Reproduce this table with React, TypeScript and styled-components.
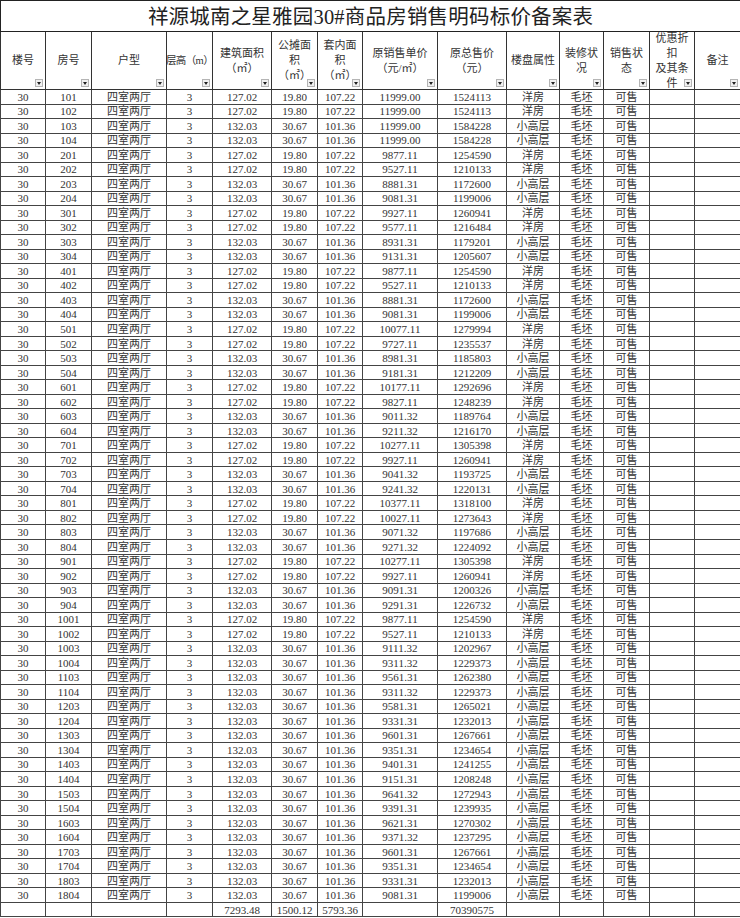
import styled, { createGlobalStyle } from 'styled-components';

const GlobalStyle = createGlobalStyle`
  html, body {
    margin: 0;
    padding: 0;
    background: #fff;
    overflow: hidden;
  }
  body {
    font-family: "Liberation Serif", "Noto Sans CJK SC", serif;
    color: #333;
  }
`;

const Sheet = styled.table`
  width: 740px;
  table-layout: fixed;
  border-collapse: collapse;
  font-size: 11px;
`;

const TitleCell = styled.th`
  height: 29px;
  padding: 1px 0 0;
  border: 1px solid #222;
  font-size: 20.5px;
  font-weight: normal;
  line-height: 28px;
  text-align: center;
  color: #222;
  letter-spacing: 0.2px;
  overflow: hidden;
`;

const HeadCell = styled.th`
  position: relative;
  height: 57px;
  padding: 0;
  border: 1px solid #333;
  font-weight: normal;
  vertical-align: middle;
`;

const HeadText = styled.div<{ $tight?: boolean }>`
  height: 57px;
  display: flex;
  flex-direction: column;
  justify-content: center;
  align-items: center;
  overflow: hidden;
  font-size: ${({ $tight }) => ($tight ? '10.5px' : '11px')};
  letter-spacing: ${({ $tight }) => ($tight ? '-0.6px' : '0')};
  line-height: 15px;
  white-space: nowrap;
  color: #333;
`;

const FilterButton = styled.span`
  position: absolute;
  right: 2px;
  bottom: 2px;
  width: 8px;
  height: 8px;
  box-sizing: border-box;
  border: 1px solid #b5b5b5;
  background: #f1f1f1;

  &::after {
    content: '';
    position: absolute;
    left: 1px;
    top: 2px;
    border-left: 2.5px solid transparent;
    border-right: 2.5px solid transparent;
    border-top: 3px solid #222;
  }
`;

const Row = styled.tr`
  height: 14.53px;
`;

const Cell = styled.td`
  padding: 0;
  border: 1px solid #444;
  text-align: center;
  line-height: 12px;
  white-space: nowrap;
  overflow: hidden;
  font-size: 11px;
`;

const widths = [45, 46, 75, 46, 59, 46, 45, 75, 69, 53, 44, 46, 45, 46];

const headers: string[][] = [
  ['楼号'],
  ['房号'],
  ['户型'],
  ['层高（m）'],
  ['建筑面积', '（㎡）'],
  ['公摊面', '积', '（㎡）'],
  ['套内面', '积', '（㎡）'],
  ['原销售单价', '（元/㎡）'],
  ['原总售价', '（元）'],
  ['楼盘属性'],
  ['装修状', '况'],
  ['销售状', '态'],
  ['优惠折', '扣', '及其条', '件'],
  ['备注'],
];

// room, unit price, total price
const sales: [string, string, string][] = [
  ['101', '11999.00', '1524113'],
  ['102', '11999.00', '1524113'],
  ['103', '11999.00', '1584228'],
  ['104', '11999.00', '1584228'],
  ['201', '9877.11', '1254590'],
  ['202', '9527.11', '1210133'],
  ['203', '8881.31', '1172600'],
  ['204', '9081.31', '1199006'],
  ['301', '9927.11', '1260941'],
  ['302', '9577.11', '1216484'],
  ['303', '8931.31', '1179201'],
  ['304', '9131.31', '1205607'],
  ['401', '9877.11', '1254590'],
  ['402', '9527.11', '1210133'],
  ['403', '8881.31', '1172600'],
  ['404', '9081.31', '1199006'],
  ['501', '10077.11', '1279994'],
  ['502', '9727.11', '1235537'],
  ['503', '8981.31', '1185803'],
  ['504', '9181.31', '1212209'],
  ['601', '10177.11', '1292696'],
  ['602', '9827.11', '1248239'],
  ['603', '9011.32', '1189764'],
  ['604', '9211.32', '1216170'],
  ['701', '10277.11', '1305398'],
  ['702', '9927.11', '1260941'],
  ['703', '9041.32', '1193725'],
  ['704', '9241.32', '1220131'],
  ['801', '10377.11', '1318100'],
  ['802', '10027.11', '1273643'],
  ['803', '9071.32', '1197686'],
  ['804', '9271.32', '1224092'],
  ['901', '10277.11', '1305398'],
  ['902', '9927.11', '1260941'],
  ['903', '9091.31', '1200326'],
  ['904', '9291.31', '1226732'],
  ['1001', '9877.11', '1254590'],
  ['1002', '9527.11', '1210133'],
  ['1003', '9111.32', '1202967'],
  ['1004', '9311.32', '1229373'],
  ['1103', '9561.31', '1262380'],
  ['1104', '9311.32', '1229373'],
  ['1203', '9581.31', '1265021'],
  ['1204', '9331.31', '1232013'],
  ['1303', '9601.31', '1267661'],
  ['1304', '9351.31', '1234654'],
  ['1403', '9401.31', '1241255'],
  ['1404', '9151.31', '1208248'],
  ['1503', '9641.32', '1272943'],
  ['1504', '9391.31', '1239935'],
  ['1603', '9621.31', '1270302'],
  ['1604', '9371.32', '1237295'],
  ['1703', '9601.31', '1267661'],
  ['1704', '9351.31', '1234654'],
  ['1803', '9331.31', '1232013'],
  ['1804', '9081.31', '1199006'],
];

const unitA = { area: '127.02', shared: '19.80', inner: '107.22', kind: '洋房' };
const unitB = { area: '132.03', shared: '30.67', inner: '101.36', kind: '小高层' };

function unitFor(room: string) {
  const last = room[room.length - 1];
  return last === '1' || last === '2' ? unitA : unitB;
}

export default function App() {
  return (
    <>
      <GlobalStyle />
      <Sheet>
        <colgroup>
          {widths.map((w, i) => (
            <col key={i} style={{ width: w }} />
          ))}
        </colgroup>
        <thead>
          <tr>
            <TitleCell colSpan={14}>祥源城南之星雅园30#商品房销售明码标价备案表</TitleCell>
          </tr>
          <tr>
            {headers.map((lines, i) => (
              <HeadCell key={i}>
                <HeadText $tight={i === 3}>
                  {lines.map((line, j) => (
                    <span key={j}>{line}</span>
                  ))}
                </HeadText>
                <FilterButton />
              </HeadCell>
            ))}
          </tr>
        </thead>
        <tbody>
          {sales.map(([room, price, total]) => {
            const u = unitFor(room);
            return (
              <Row key={room}>
                <Cell>30</Cell>
                <Cell>{room}</Cell>
                <Cell>四室两厅</Cell>
                <Cell>3</Cell>
                <Cell>{u.area}</Cell>
                <Cell>{u.shared}</Cell>
                <Cell>{u.inner}</Cell>
                <Cell>{price}</Cell>
                <Cell>{total}</Cell>
                <Cell>{u.kind}</Cell>
                <Cell>毛坯</Cell>
                <Cell>可售</Cell>
                <Cell />
                <Cell />
              </Row>
            );
          })}
          <Row>
            <Cell />
            <Cell />
            <Cell />
            <Cell />
            <Cell>7293.48</Cell>
            <Cell>1500.12</Cell>
            <Cell>5793.36</Cell>
            <Cell />
            <Cell>70390575</Cell>
            <Cell />
            <Cell />
            <Cell />
            <Cell />
            <Cell />
          </Row>
        </tbody>
      </Sheet>
    </>
  );
}
